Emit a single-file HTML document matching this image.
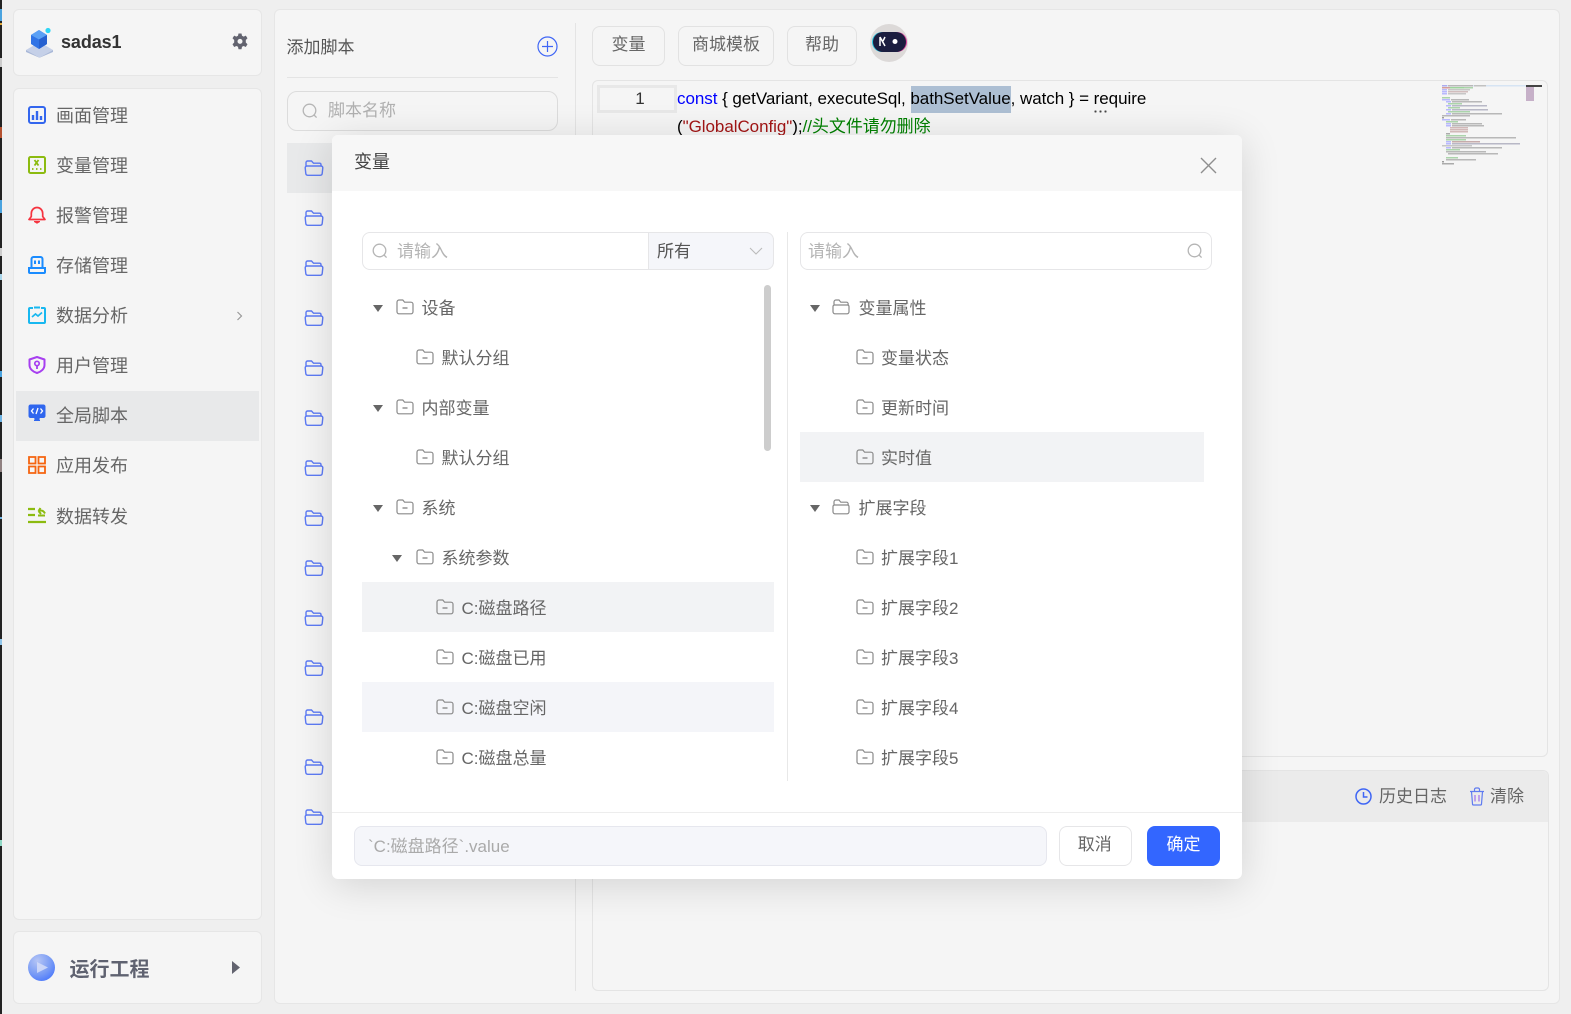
<!DOCTYPE html>
<html lang="zh-CN">
<head>
<meta charset="utf-8">
<title>全局脚本</title>
<style>
*{box-sizing:border-box}
html,body{margin:0;padding:0;width:1571px;height:1014px;overflow:hidden;background:#efefef;font-family:"Liberation Sans","Noto Sans CJK SC",sans-serif;color:#666}
.a{position:absolute}
.card{position:absolute;background:#f5f5f5;border:1px solid #e6e6e6;border-radius:6px}
.m{position:absolute;left:56px;font-size:18px;line-height:26px;height:26px;color:#666;white-space:nowrap}
.mi{position:absolute;left:28px;width:18px;height:18px}
.btn{position:absolute;top:26px;height:40px;border:1px solid #e2e2e2;border-radius:8px;font-size:17px;line-height:36px;text-align:center;color:#666}
.f{position:absolute;left:304px;width:20px;height:18px}
.t{position:absolute;font-size:17px;line-height:24px;height:24px;color:#666;white-space:nowrap}
.i{position:absolute;width:18px;height:16px}
.c{position:absolute;width:0;height:0;border-left:5.5px solid transparent;border-right:5.5px solid transparent;border-top:7px solid #666}
.h{position:absolute;height:50px}
.mini{filter:blur(.35px);opacity:.8}
.mini rect{height:1.5px}
.code{position:absolute;left:677px;height:28px;line-height:28px;font-size:17px;letter-spacing:-.05px;color:#000;white-space:nowrap}
</style>
</head>
<body>
<svg width="0" height="0" style="position:absolute">
<defs>
<symbol id="fb" viewBox="0 0 20 18"><path d="M2 7V3.6C2 2.7 2.7 2 3.6 2H7.5L9.5 4.2H15.5C16.4 4.2 17 4.9 17 5.8V7M1.2 8.8C1.2 7.8 2 7 3 7H17C18 7 18.8 7.8 18.8 8.8L18.2 14.6C18.1 15.6 17.3 16.3 16.3 16.3H3.7C2.7 16.3 1.9 15.6 1.8 14.6Z" fill="none" stroke="#5d7bf5" stroke-width="1.400"/></symbol>
<symbol id="fm" viewBox="0 0 18 16"><path d="M1 3.2C1 2 1.9 1 3 1H6.8L8.6 3.2H15C16.1 3.2 17 4.1 17 5.2V12.8C17 13.9 16.1 14.8 15 14.8H3C1.9 14.8 1 13.9 1 12.8Z" fill="none" stroke="#8a8a8a" stroke-width="1.2"/><path d="M6.5 9H11.5" stroke="#777" stroke-width="1.2"/></symbol>
<symbol id="fo" viewBox="0 0 18 16"><path d="M2 6V3C2 2 2.8 1 3.8 1H7L8.8 3.2H14.5C15.5 3.2 16.2 4 16.2 5V6M1 7.5C1 6.7 1.7 6 2.5 6H15.5C16.3 6 17 6.7 17 7.5V12.8C17 13.9 16.1 14.8 15 14.8H3C1.9 14.8 1 13.9 1 12.8Z" fill="none" stroke="#8a8a8a" stroke-width="1.2"/></symbol>
<symbol id="srch" viewBox="0 0 16 16"><circle cx="7.5" cy="7.5" r="6.3" fill="none" stroke="#b5b5b5" stroke-width="1.3"/><path d="M12 12L14.6 14.6" stroke="#b5b5b5" stroke-width="1.3"/></symbol>
</defs>
</svg>

<!-- left window strip -->
<div class="a" style="left:0;top:0;width:1.500px;height:1014px;background:#222"></div>
<div class="a" style="left:0;top:9px;width:1.500px;height:12px;background:#4aa3df"></div>
<div class="a" style="left:0;top:23px;width:1.500px;height:2px;background:#e0a93a"></div>
<div class="a" style="left:0;top:58px;width:1.500px;height:9px;background:#ccc"></div>
<div class="a" style="left:0;top:127px;width:1.500px;height:11px;background:#b5512f"></div>
<div class="a" style="left:0;top:200px;width:1.500px;height:13px;background:#4aa3df"></div>
<div class="a" style="left:0;top:248px;width:1.500px;height:8px;background:#ccc"></div>
<div class="a" style="left:0;top:274px;width:1.500px;height:6px;background:#a8d5ea"></div>
<div class="a" style="left:0;top:371px;width:1.500px;height:6px;background:#4aa3df"></div>
<div class="a" style="left:0;top:415px;width:1.500px;height:7px;background:#6fb5e5"></div>
<div class="a" style="left:0;top:459px;width:1.500px;height:13px;background:#8f8080"></div>
<div class="a" style="left:0;top:517px;width:1.500px;height:2px;background:#6fb5e5"></div>
<div class="a" style="left:0;top:639px;width:1.500px;height:6px;background:#8fc5ea"></div>
<div class="a" style="left:0;top:840px;width:1.500px;height:6px;background:#8fd8c5"></div>

<!-- sidebar -->
<div class="card" style="left:13px;top:9px;width:249px;height:67px"></div>
<svg class="a" style="left:25px;top:26px" width="30" height="32" viewBox="0 0 30 32">
<path d="M1 24L14.500 16L28 24L14.500 31.500Z" fill="#c5d0e8"/><path d="M1 24L14.500 31.500L28 24V26L14.500 31.800L1 26Z" fill="#a9b8d8"/>
<path d="M6 9L14 4L22 9V18L14 23L6 18Z" fill="#2f73e6"/><path d="M6 9L14 13.500L22 9L14 4Z" fill="#5aa0f5"/><path d="M14 13.500V23L22 18V9Z" fill="#2560d0"/>
<circle cx="23" cy="4.500" r="2.600" fill="#2fd5f5"/>
</svg>
<div class="a" style="left:61px;top:30px;font-size:18px;line-height:24px;font-weight:bold;color:#333;letter-spacing:-.1px">sadas1</div>
<svg class="a" style="left:232px;top:33px" width="16" height="17" viewBox="0 0 16 17"><path fill-rule="evenodd" d="M6.500 0.500H9.500L10 2.800L11.700 3.600L13.800 2.600L15.500 5.300L13.800 7V9.500L15.500 11.200L13.800 14L11.700 13L10 13.800L9.500 16.200H6.500L6 13.800L4.300 13L2.200 14L0.500 11.200L2.200 9.500V7L0.500 5.300L2.200 2.600L4.300 3.600L6 2.800ZM8 5.900A2.500 2.500 0 1 0 8 10.900A2.500 2.500 0 1 0 8 5.900Z" fill="#62636f"/></svg>

<div class="card" style="left:13px;top:88px;width:249px;height:832px"></div>
<div class="a" style="left:16px;top:391px;width:243px;height:50px;background:#e8e9ea"></div>

<svg class="mi" style="top:106px" viewBox="0 0 18 18"><rect x="1" y="1" width="16" height="16" rx="2" fill="none" stroke="#3366ee" stroke-width="2"/><path d="M5 9V14M9 5V14M13 10V14" stroke="#3366ee" stroke-width="2.400"/></svg>
<div class="m" style="top:103px">画面管理</div>
<svg class="mi" style="top:156px" viewBox="0 0 18 18"><rect x="1" y="1" width="16" height="16" rx="1.500" fill="none" stroke="#8cbb10" stroke-width="2"/><path d="M6.500 4L10.500 9.500M10.500 4L6.500 9.500" stroke="#8cbb10" stroke-width="1.800"/><path d="M4 13H5.500M8 13H9.500M12 13H13.500" stroke="#8cbb10" stroke-width="1.800"/></svg>
<div class="m" style="top:153px">变量管理</div>
<svg class="mi" style="top:206px" viewBox="0 0 18 18"><path d="M1 13.500H17L14.700 10.500V7.500C14.700 4.200 12.200 1.500 9 1.500C5.800 1.500 3.300 4.200 3.300 7.500V10.500Z" fill="none" stroke="#f5333f" stroke-width="1.700" stroke-linejoin="round"/><path d="M6 15H12V16L9 17.800L6 16Z" fill="#f5333f"/></svg>
<div class="m" style="top:203px">报警管理</div>
<svg class="mi" style="top:256px" viewBox="0 0 18 18"><path d="M3.500 11V3C3.500 1.900 4.400 1 5.500 1H12.500C13.600 1 14.500 1.900 14.500 3V11" fill="none" stroke="#1a8cff" stroke-width="2"/><path d="M7 4.500V8M11 4.500V8" stroke="#1a8cff" stroke-width="2"/><path d="M1 12H17V16C17 16.600 16.600 17 16 17H2C1.400 17 1 16.600 1 16Z" fill="none" stroke="#1a8cff" stroke-width="2"/></svg>
<div class="m" style="top:253px">存储管理</div>
<svg class="mi" style="top:306px" viewBox="0 0 18 18"><path d="M5 2H2C1.400 2 1 2.400 1 3V16C1 16.600 1.400 17 2 17H16C16.600 17 17 16.600 17 16V3C17 2.400 16.600 2 16 2H13M6 1.500H12" fill="none" stroke="#18b8f0" stroke-width="2"/><path d="M4 11L7.500 8L10 10L14 6.500" fill="none" stroke="#18b8f0" stroke-width="1.700"/></svg>
<div class="m" style="top:303px">数据分析</div>
<svg class="a" style="left:236px;top:311px" width="7" height="10" viewBox="0 0 7 10"><path d="M1.500 1L5.500 5L1.500 9" fill="none" stroke="#999" stroke-width="1.200"/></svg>
<svg class="mi" style="top:356px" viewBox="0 0 18 18"><path d="M9 1L16.500 3.500V9C16.500 13 13 15.800 9 17C5 15.800 1.500 13 1.500 9V3.500Z" fill="none" stroke="#a73ff0" stroke-width="2" stroke-linejoin="round"/><circle cx="9" cy="7.500" r="2.200" fill="none" stroke="#a73ff0" stroke-width="1.700"/><path d="M9 9.500V13" stroke="#a73ff0" stroke-width="1.800"/></svg>
<div class="m" style="top:353px">用户管理</div>
<svg class="mi" style="top:404px" viewBox="0 0 18 18"><path d="M2.500 0.500H15.500C16.600 0.500 17.500 1.400 17.500 2.500V12C17.500 13.100 16.600 14 15.500 14H12L11 15.500H12V17H6V15.500H7L6 14H2.500C1.400 14 0.500 13.100 0.500 12V2.500C0.500 1.400 1.400 0.500 2.500 0.500Z" fill="#2f66ee"/><path d="M5.500 4.500L3.500 7L5.500 9.500M12.500 4.500L14.500 7L12.500 9.500M10 4L8 10" fill="none" stroke="#fff" stroke-width="1.300"/></svg>
<div class="m" style="top:403px">全局脚本</div>
<svg class="mi" style="top:456px" viewBox="0 0 18 18"><path d="M1 1H7.500V7.500H1ZM10.500 1H17V7.500H10.500ZM1 10.500H7.500V17H1ZM10.500 10.500H17V17H10.500Z" fill="none" stroke="#f5640f" stroke-width="1.800"/></svg>
<div class="m" style="top:453px">应用发布</div>
<svg class="mi" style="top:506px" viewBox="0 0 18 18"><path d="M0 3H7M0 9H7M0 16H18" stroke="#8cbb10" stroke-width="2.200"/><path d="M17 7.500C15.500 4.500 13 4 10.500 5M10.500 5L12.500 2M10.500 5L13 8M10 9.500H17" fill="none" stroke="#8cbb10" stroke-width="2"/></svg>
<div class="m" style="top:503.500px">数据转发</div>

<div class="card" style="left:13px;top:931px;width:249px;height:73px"></div>
<div class="a" style="left:28px;top:954px;width:27px;height:27px;border-radius:50%;background:radial-gradient(circle at 35% 25%,#b5c5f5 0%,#7a9cf5 50%,#3366ff 100%)"></div>
<svg class="a" style="left:36px;top:961px" width="13" height="13" viewBox="0 0 13 13"><path d="M1 1L12 6.500L1 12Z" fill="#d5ddf8" opacity=".85"/></svg>
<div class="a" style="left:69.500px;top:956px;font-size:20px;line-height:28px;font-weight:bold;color:#5f6270">运行工程</div>
<svg class="a" style="left:232px;top:961px" width="8" height="13" viewBox="0 0 8 13"><path d="M0 0L8 6.500L0 13Z" fill="#62636f"/></svg>

<!-- main panel -->
<div class="card" style="left:274px;top:9px;width:1286px;height:995px"></div>
<div class="t" style="left:286.500px;top:35.500px;color:#555">添加脚本</div>
<svg class="a" style="left:537px;top:36px" width="21" height="21" viewBox="0 0 21 21"><circle cx="10.500" cy="10.500" r="9.500" fill="none" stroke="#3f66f5" stroke-width="1.200"/><path d="M10.500 5V16M5 10.500H16" stroke="#3f66f5" stroke-width="1.200"/></svg>
<div class="a" style="left:287px;top:77px;width:271px;height:1px;background:#e4e4e4"></div>
<div class="a" style="left:287px;top:91px;width:271px;height:40px;border:1px solid #dcdcdc;border-radius:10px"></div>
<svg class="a" style="left:302px;top:103px" width="16" height="16"><use href="#srch"/></svg>
<div class="t" style="left:328px;top:99px;color:#b0b0b0">脚本名称</div>
<div class="a" style="left:287px;top:143px;width:60px;height:50px;background:#e8e9ea"></div>
<div class="a" style="left:575px;top:23px;width:1px;height:968px;background:#e4e4e4"></div>

<svg class="f" style="top:159px"><use href="#fb"/></svg>
<svg class="f" style="top:209px"><use href="#fb"/></svg>
<svg class="f" style="top:259px"><use href="#fb"/></svg>
<svg class="f" style="top:309px"><use href="#fb"/></svg>
<svg class="f" style="top:359px"><use href="#fb"/></svg>
<svg class="f" style="top:409px"><use href="#fb"/></svg>
<svg class="f" style="top:459px"><use href="#fb"/></svg>
<svg class="f" style="top:509px"><use href="#fb"/></svg>
<svg class="f" style="top:559px"><use href="#fb"/></svg>
<svg class="f" style="top:609px"><use href="#fb"/></svg>
<svg class="f" style="top:659px"><use href="#fb"/></svg>
<svg class="f" style="top:708px"><use href="#fb"/></svg>
<svg class="f" style="top:758px"><use href="#fb"/></svg>
<svg class="f" style="top:808px"><use href="#fb"/></svg>

<div class="btn" style="left:592px;width:73px">变量</div>
<div class="btn" style="left:678px;width:96px">商城模板</div>
<div class="btn" style="left:787px;width:70px">帮助</div>
<div class="a" style="left:870px;top:24px;width:38px;height:38px;border-radius:50%;background:#dcd9d8"></div>
<div class="a" style="left:873px;top:32px;width:33px;height:20px;border-radius:10px;background:#1b1d3f;box-shadow:-1px 0 0 #25c5dd,1px 0 0 #d8409a"></div>
<svg class="a" style="left:878px;top:35px" width="22" height="13" viewBox="0 0 22 13"><path d="M2 2V11M2 2L7 11M7 2L5 6" fill="none" stroke="#fff" stroke-width="1.500"/><circle cx="17" cy="6.500" r="2.500" fill="#fff"/></svg>

<!-- code editor -->
<div class="a" style="left:592px;top:80px;width:956px;height:677px;border:1px solid #e4e4e4;border-radius:6px"></div>
<div class="a" style="left:597px;top:85px;width:80px;height:28px;border:3px solid #e8e8e8;background:#f5f5f5"></div>
<div class="a" style="left:597px;top:86px;width:86px;height:26px;line-height:26px;text-align:center;font-size:17px;color:#333">1</div>
<div class="a" style="left:911px;top:86px;width:100px;height:27px;background:#adbfd3"></div>
<div class="code" style="top:85px"><span style="color:#00f">const</span> { getVariant, executeSql, bathSetValue, watch } = require</div>
<div class="code" style="top:113px">(<span style="color:#a31515">"GlobalConfig"</span>);<span style="color:#008000">//头文件请勿删除</span></div>
<div class="a" style="left:1093px;top:109.500px;width:14px;height:3px;background-image:radial-gradient(circle,#444 1px,transparent 1.200px);background-size:5px 3px"></div>

<!-- minimap -->
<div class="a" style="left:1526px;top:85px;width:16px;height:2px;background:#444"></div>
<div class="a" style="left:1526px;top:87px;width:8px;height:14px;background:#c6b0c8"></div>
<svg class="a mini" style="left:1442px;top:85px" width="84" height="84" viewBox="0 0 84 84">
<rect x="0" y="0" width="84" height="2" fill="#cfe0f3"/><rect x="0" y="0" width="5" height="2" fill="#9a9aef"/><rect x="6" y="0" width="25" height="2" fill="#aaa"/><rect x="32" y="0" width="12" height="2" fill="#b5b5b5"/>
<rect x="0" y="2" width="8" height="2" fill="#c88"/><rect x="8" y="2" width="14" height="2" fill="#8c8"/><rect x="22" y="2" width="9" height="2" fill="#9c9"/>
<rect x="0" y="4" width="5" height="2" fill="#aaf"/><rect x="6" y="4" width="22" height="2" fill="#bbb"/>
<rect x="0" y="6" width="5" height="2" fill="#aaf"/><rect x="6" y="6" width="20" height="2" fill="#c9b0b0"/>
<rect x="0" y="8" width="5" height="2" fill="#aaf"/><rect x="6" y="8" width="18" height="2" fill="#bbb"/>
<rect x="0" y="12" width="8" height="2" fill="#9c9"/>
<rect x="0" y="14" width="8" height="2" fill="#aaf"/><rect x="9" y="14" width="18" height="2" fill="#aaa"/>
<rect x="4" y="16" width="5" height="2" fill="#aaf"/><rect x="10" y="16" width="30" height="2" fill="#aaa"/>
<rect x="6" y="18" width="14" height="2" fill="#9c9"/>
<rect x="4" y="20" width="5" height="2" fill="#aaf"/><rect x="10" y="20" width="35" height="2" fill="#aab"/>
<rect x="6" y="22" width="12" height="2" fill="#9c9"/>
<rect x="4" y="24" width="5" height="2" fill="#aaf"/><rect x="10" y="24" width="36" height="2" fill="#aab"/>
<rect x="6" y="26" width="22" height="2" fill="#9c9"/>
<rect x="4" y="28" width="5" height="2" fill="#aaf"/><rect x="10" y="28" width="50" height="2" fill="#aaa"/>
<rect x="0" y="30" width="28" height="2" fill="#aaa"/>
<rect x="0" y="32" width="2" height="2" fill="#888"/>
<rect x="0" y="34" width="8" height="2" fill="#aaf"/><rect x="9" y="34" width="15" height="2" fill="#aaa"/>
<rect x="4" y="36" width="12" height="2" fill="#9c9"/>
<rect x="4" y="38" width="5" height="2" fill="#aaf"/><rect x="10" y="38" width="30" height="2" fill="#aaa"/>
<rect x="4" y="40" width="5" height="2" fill="#aaf"/><rect x="10" y="40" width="32" height="2" fill="#aaa"/>
<rect x="8" y="42" width="18" height="2" fill="#c9a9a9"/>
<rect x="8" y="44" width="18" height="2" fill="#c9a9a9"/>
<rect x="8" y="46" width="18" height="2" fill="#c9a9a9"/>
<rect x="4" y="48" width="4" height="2" fill="#999"/>
<rect x="4" y="50" width="20" height="2" fill="#9c9"/>
<rect x="4" y="52" width="70" height="2" fill="#aaa"/>
<rect x="4" y="54" width="20" height="2" fill="#9c9"/>
<rect x="4" y="56" width="5" height="2" fill="#aaf"/><rect x="10" y="56" width="28" height="2" fill="#b99"/>
<rect x="4" y="58" width="5" height="2" fill="#aaf"/><rect x="10" y="58" width="68" height="2" fill="#aab"/>
<rect x="0" y="60" width="30" height="2" fill="#bbb"/>
<rect x="4" y="62" width="5" height="2" fill="#aaf"/><rect x="10" y="62" width="50" height="2" fill="#aaa"/>
<rect x="4" y="64" width="14" height="2" fill="#9c9"/>
<rect x="4" y="66" width="40" height="2" fill="#aaa"/>
<rect x="6" y="68" width="50" height="2" fill="#aaa"/>
<rect x="4" y="72" width="12" height="2" fill="#9c9"/>
<rect x="4" y="74" width="30" height="2" fill="#aaa"/>
<rect x="0" y="76" width="2" height="2" fill="#888"/>
<rect x="0" y="78" width="12" height="2" fill="#999"/>
</svg>

<!-- log panel -->
<div class="a" style="left:592px;top:770px;width:957px;height:221px;border:1px solid #e4e4e4;border-radius:6px"></div>
<div class="a" style="left:593px;top:771px;width:955px;height:51px;background:#ebebeb;border-radius:6px 6px 0 0"></div>
<svg class="a" style="left:1355px;top:788px" width="17" height="17" viewBox="0 0 17 17"><circle cx="8.500" cy="8.500" r="7.500" fill="none" stroke="#3f66f5" stroke-width="1.500"/><path d="M8.500 4V9H12.500" fill="none" stroke="#3f66f5" stroke-width="1.500"/></svg>
<div class="t" style="left:1379px;top:785px">历史日志</div>
<svg class="a" style="left:1469px;top:787px" width="16" height="19" viewBox="0 0 16 19"><path d="M1 4.500H15M5.500 4.500V2.500C5.500 1.700 6.200 1 7 1H9C9.800 1 10.500 1.700 10.500 2.500V4.500M2.500 4.500L3.500 17C3.500 17.600 4 18 4.500 18H11.500C12 18 12.500 17.600 12.500 17L13.500 4.500" fill="none" stroke="#5f7bf0" stroke-width="1.200"/><path d="M6 8V14.500M10 8V14.500" stroke="#a06ff0" stroke-width="1.200"/></svg>
<div class="t" style="left:1490px;top:785px">清除</div>

<!-- modal shadow + body -->
<div class="a" style="left:332px;top:135px;width:910px;height:744px;background:#fff;border-radius:6px;box-shadow:0 6px 40px rgba(0,0,0,.14)"></div>
<div class="a" style="left:332px;top:135px;width:910px;height:56px;background:#f7f7f7;border-radius:6px 6px 0 0"></div>
<div class="a" style="left:354px;top:149px;font-size:18px;line-height:26px;color:#444">变量</div>
<svg class="a" style="left:1200px;top:157px" width="17" height="17" viewBox="0 0 17 17"><path d="M1 1L16 16M16 1L1 16" stroke="#8e8e8e" stroke-width="1.400"/></svg>

<!-- left input -->
<div class="a" style="left:362px;top:232px;width:412px;height:38px;border:1px solid #e6e6e8;border-radius:8px;background:#fff"></div>
<div class="a" style="left:648px;top:232px;width:126px;height:38px;border:1px solid #e6e6e8;border-radius:0 8px 8px 0;background:#f5f6fa"></div>
<svg class="a" style="left:372px;top:243px" width="16" height="16"><use href="#srch"/></svg>
<div class="t" style="left:397px;top:240px;color:#b4b4b4">请输入</div>
<div class="t" style="left:657px;top:240px;color:#555">所有</div>
<svg class="a" style="left:749px;top:247px" width="14" height="8" viewBox="0 0 14 8"><path d="M1 1L7 7L13 1" fill="none" stroke="#bbb" stroke-width="1.100"/></svg>
<!-- right input -->
<div class="a" style="left:800px;top:232px;width:412px;height:38px;border:1px solid #e6e6e8;border-radius:8px;background:#fff"></div>
<div class="t" style="left:808px;top:240px;color:#b4b4b4">请输入</div>
<svg class="a" style="left:1187px;top:243px" width="16" height="16"><use href="#srch"/></svg>
<div class="a" style="left:786.500px;top:232px;width:1px;height:549px;background:#e8e8e8"></div>

<!-- highlights -->
<div class="h" style="left:362px;top:582px;width:412px;background:#f2f3f5"></div>
<div class="h" style="left:362px;top:682px;width:412px;background:#f4f5f9"></div>
<div class="h" style="left:800px;top:432px;width:404px;background:#f2f3f5"></div>
<div class="a" style="left:764px;top:285px;width:7px;height:166px;border-radius:4px;background:#cdcdcd"></div>

<!-- left tree -->
<div class="c" style="left:373px;top:305px"></div><svg class="i" style="left:395.500px;top:298.500px"><use href="#fm"/></svg><div class="t" style="left:421.500px;top:297px">设备</div>
<svg class="i" style="left:415.500px;top:348.500px"><use href="#fm"/></svg><div class="t" style="left:441.500px;top:347px">默认分组</div>
<div class="c" style="left:373px;top:405px"></div><svg class="i" style="left:395.500px;top:398.500px"><use href="#fm"/></svg><div class="t" style="left:421.500px;top:397px">内部变量</div>
<svg class="i" style="left:415.500px;top:448.500px"><use href="#fm"/></svg><div class="t" style="left:441.500px;top:447px">默认分组</div>
<div class="c" style="left:373px;top:505px"></div><svg class="i" style="left:395.500px;top:498.500px"><use href="#fm"/></svg><div class="t" style="left:421.500px;top:497px">系统</div>
<div class="c" style="left:392px;top:555px"></div><svg class="i" style="left:415.500px;top:548.500px"><use href="#fm"/></svg><div class="t" style="left:441.500px;top:547px">系统参数</div>
<svg class="i" style="left:435.500px;top:598.500px"><use href="#fm"/></svg><div class="t" style="left:461.500px;top:597px">C:磁盘路径</div>
<svg class="i" style="left:435.500px;top:648.500px"><use href="#fm"/></svg><div class="t" style="left:461.500px;top:647px">C:磁盘已用</div>
<svg class="i" style="left:435.500px;top:698.500px"><use href="#fm"/></svg><div class="t" style="left:461.500px;top:697px">C:磁盘空闲</div>
<svg class="i" style="left:435.500px;top:748.500px"><use href="#fm"/></svg><div class="t" style="left:461.500px;top:747px">C:磁盘总量</div>

<!-- right tree -->
<div class="c" style="left:810px;top:305px"></div><svg class="i" style="left:832px;top:298.500px"><use href="#fo"/></svg><div class="t" style="left:858.500px;top:297px">变量属性</div>
<svg class="i" style="left:855.500px;top:348.500px"><use href="#fm"/></svg><div class="t" style="left:881px;top:347px">变量状态</div>
<svg class="i" style="left:855.500px;top:398.500px"><use href="#fm"/></svg><div class="t" style="left:881px;top:397px">更新时间</div>
<svg class="i" style="left:855.500px;top:448.500px"><use href="#fm"/></svg><div class="t" style="left:881px;top:447px">实时值</div>
<div class="c" style="left:810px;top:505px"></div><svg class="i" style="left:832px;top:498.500px"><use href="#fo"/></svg><div class="t" style="left:858.500px;top:497px">扩展字段</div>
<svg class="i" style="left:855.500px;top:548.500px"><use href="#fm"/></svg><div class="t" style="left:881px;top:547px">扩展字段1</div>
<svg class="i" style="left:855.500px;top:598.500px"><use href="#fm"/></svg><div class="t" style="left:881px;top:597px">扩展字段2</div>
<svg class="i" style="left:855.500px;top:648.500px"><use href="#fm"/></svg><div class="t" style="left:881px;top:647px">扩展字段3</div>
<svg class="i" style="left:855.500px;top:698.500px"><use href="#fm"/></svg><div class="t" style="left:881px;top:697px">扩展字段4</div>
<svg class="i" style="left:855.500px;top:748.500px"><use href="#fm"/></svg><div class="t" style="left:881px;top:747px">扩展字段5</div>

<!-- footer -->
<div class="a" style="left:332px;top:812px;width:910px;height:1px;background:#ededed"></div>
<div class="a" style="left:354px;top:826px;width:693px;height:40px;border:1px solid #e6e7ee;border-radius:8px;background:#f5f6fa;padding-left:13px;font-size:17px;line-height:39px;color:#aaa;white-space:nowrap">`C:磁盘路径`.value</div>
<div class="a" style="left:1058.500px;top:826px;width:73.500px;height:40px;border:1px solid #e6e6e8;border-radius:8px;background:#fff;text-align:center;font-size:17px;line-height:36px;color:#666;text-indent:-1px">取消</div>
<div class="a" style="left:1147px;top:826px;width:73px;height:40px;border-radius:8px;background:#3366ff;text-align:center;font-size:17px;line-height:37px;color:#fff">确定</div>
</body>
</html>
